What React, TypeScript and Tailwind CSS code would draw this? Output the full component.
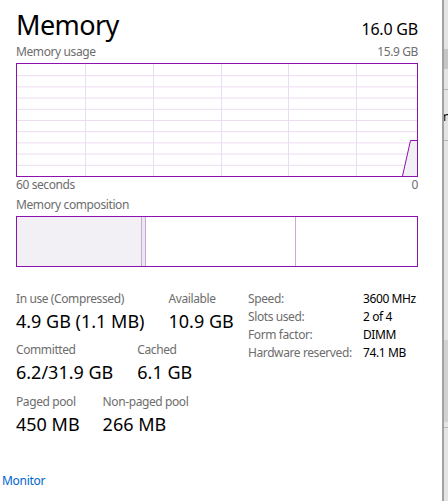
import React from "react";

const font = { fontFamily: '"Noto Sans", "Open Sans", sans-serif' };

function UsageChart() {
  const vx = [68, 136, 204, 271, 339];
  const hy = [1, 2, 3, 4, 5, 6, 7, 8, 9].map((i) => i * 11.2);
  return (
    <div className="h-[114px] border border-[#8b12ae] bg-white">
      <svg width="400" height="112" viewBox="0 0 400 112" className="block">
        {hy.map((y) => (
          <line key={"h" + y} x1="0" x2="400" y1={y + 0.5} y2={y + 0.5} stroke="#ecdcf1" strokeWidth="1" />
        ))}
        {vx.map((x) => (
          <line key={"v" + x} x1={x + 0.5} x2={x + 0.5} y1="0" y2="112" stroke="#ecdcf1" strokeWidth="1" />
        ))}
        <polygon points="385.5,112 393.5,76.5 400,76.5 400,112" fill="#f3f0f5" />
        <polyline points="385.5,112 393.5,76.5 400,76.5" fill="none" stroke="#8b12ae" strokeWidth="1" />
      </svg>
    </div>
  );
}

function Composition() {
  return (
    <div className="flex h-[51px] border border-[#8b12ae] bg-white">
      <div className="w-[124px] bg-[#f3f0f5]" />
      <div className="w-[1px] bg-[#c9aad6]" />
      <div className="w-[3px] bg-[#ede6f0]" />
      <div className="w-[1px] bg-[#c9aad6]" />
      <div className="w-[149px]" />
      <div className="w-[1px] bg-[#c9aad6]" />
      <div className="flex-1" />
    </div>
  );
}

function Stat({ label, value }: { label: string; value: string }) {
  return (
    <div className="flex flex-col whitespace-nowrap">
      <div className="text-[12px] leading-[16px] tracking-[-0.4px] text-[#6d6d6d]">{label}</div>
      <div className="mt-[2px] text-[18px] leading-[24px] text-black">{value}</div>
    </div>
  );
}

export default function App() {
  const info: [string, string][] = [
    ["Speed:", "3600 MHz"],
    ["Slots used:", "2 of 4"],
    ["Form factor:", "DIMM"],
    ["Hardware reserved:", "74.1 MB"],
  ];
  return (
    <div className="flex h-[501px] w-[448px] overflow-hidden bg-white" style={font}>
      <div className="flex w-[442px] flex-col">
        <div className="px-[16px] pr-[24px]">
          <div className="flex h-[44px] items-baseline justify-between pt-[5px] leading-[40px]">
            <span className="text-[27px] tracking-[-0.6px] text-black">Memory</span>
            <span className="text-[16px] tracking-[-0.2px] text-black">16.0 GB</span>
          </div>
          <div className="flex justify-between text-[12px] leading-[16px] tracking-[-0.4px] text-[#6d6d6d]">
            <span>Memory usage</span>
            <span>15.9 GB</span>
          </div>
          <div className="mt-[3px]">
            <UsageChart />
          </div>
          <div className="flex justify-between text-[12px] leading-[16px] tracking-[-0.4px] text-[#6d6d6d]">
            <span>60 seconds</span>
            <span>0</span>
          </div>
          <div className="mt-[4px] text-[12px] leading-[16px] tracking-[-0.4px] text-[#6d6d6d]">Memory composition</div>
          <div className="mt-[3px]">
            <Composition />
          </div>
          <div className="mt-[21px] flex items-start">
            <div className="flex w-[232px] flex-col pt-[3px]">
              <div className="flex gap-[24px]">
                <Stat label="In use (Compressed)" value="4.9 GB (1.1 MB)" />
                <Stat label="Available" value="10.9 GB" />
              </div>
              <div className="mt-[9px] flex gap-[24px]">
                <Stat label="Committed" value="6.2/31.9 GB" />
                <Stat label="Cached" value="6.1 GB" />
              </div>
              <div className="mt-[10px] flex gap-[23px]">
                <Stat label="Paged pool" value="450 MB" />
                <Stat label="Non-paged pool" value="266 MB" />
              </div>
            </div>
            <div className="grid grid-cols-[115px_auto] content-start whitespace-nowrap pt-[2px] text-[12px] leading-[18px] tracking-[-0.4px]">
              {info.map(([k, v]) => (
                <React.Fragment key={k}>
                  <span className="text-[#6d6d6d]">{k}</span>
                  <span className="text-black">{v}</span>
                </React.Fragment>
              ))}
            </div>
          </div>
        </div>
        <div className="mt-auto mb-[12px] pl-[2px] text-[12px] leading-[16px] tracking-[-0.3px] text-[#0066cc]">Monitor</div>
      </div>
      <div className="flex w-[6px] flex-col border-l-2 border-[#a3a3a3] bg-[#e4e4e4]">
        <div className="h-[49px]" />
        <div className="h-[20px] bg-[#c6c6c6]" />
        <div className="h-[20px]" />
        <div className="h-[1px] bg-[#b4b4b4]" />
        <div className="h-[22px]" />
        <div className="h-[9px] overflow-hidden text-[12px] leading-[9px] text-black">
          <span className="-ml-[5px]">m</span>
        </div>
        <div className="h-[19px]" />
        <div className="h-[1px] bg-[#b4b4b4]" />
        <div className="h-[199px]" />
        <div className="h-[82px] bg-[#d2d2d2]" />
        <div className="h-[5px]" />
        <div className="h-[1px] bg-[#b4b4b4]" />
        <div className="flex-1" />
      </div>
    </div>
  );
}
